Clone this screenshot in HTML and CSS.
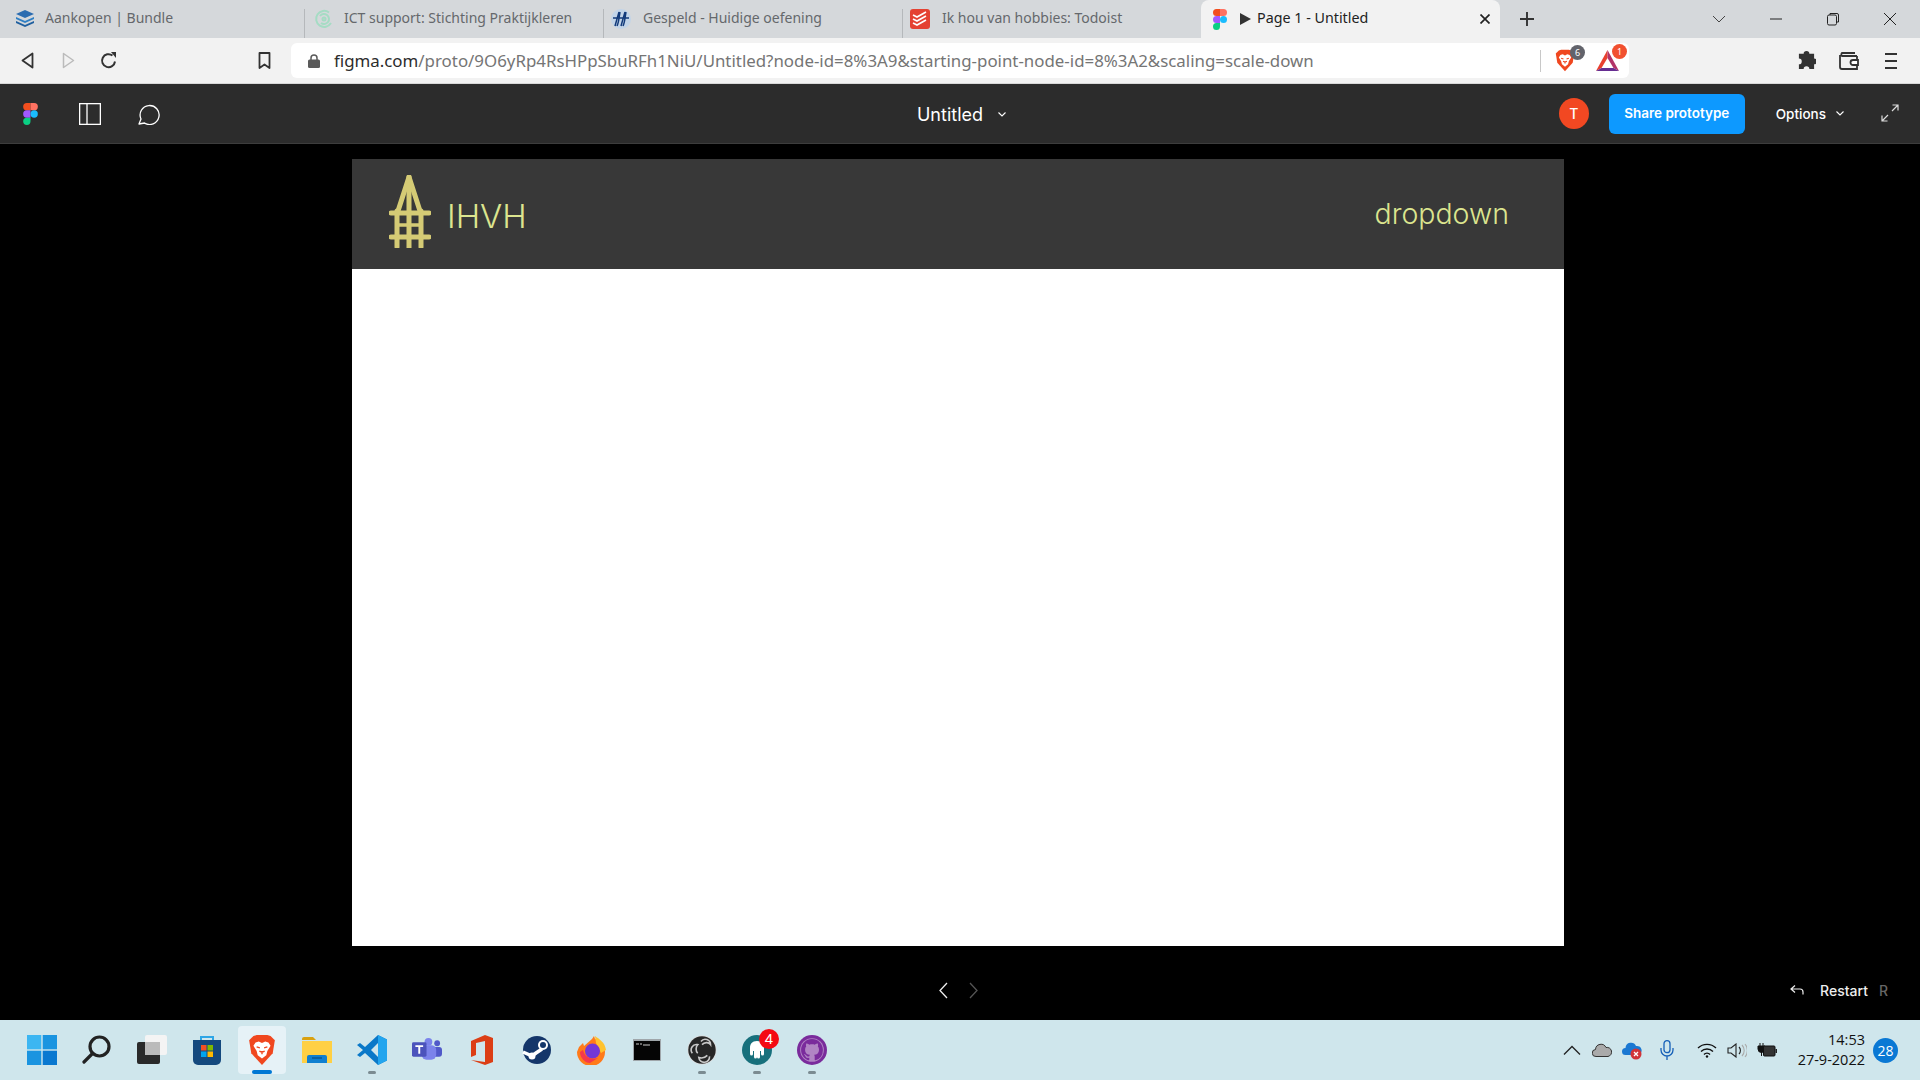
FILE: index.html
```html
<!DOCTYPE html>
<html lang="en">
	<head>
		<meta charset="UTF-8" />
		<title>Page 1 - Untitled</title>
		<link rel="stylesheet" href="styles.css">
	</head>
	<body>
		<!-- browser tabs -->
		<div class="tabstrip">
			<div class="tab">
				<svg class="favicon" viewBox="0 0 20 20"><path d="M10 1l9 4-9 4-9-4z" fill="#2b6cb0"/><path d="M1 8l9 4 9-4v2l-9 4-9-4z" fill="#2f7fc4"/><path d="M1 12l9 4 9-4v2l-9 4-9-4z" fill="#1f5f9f"/></svg>
				<span class="tab-title">Aankopen | Bundle</span>
			</div>
			<div class="tab">
				<svg class="favicon" viewBox="0 0 20 20" fill="none" stroke="#a5dcc4" stroke-width="2"><path d="M15 3.5A8 8 0 1 0 17 14"/><path d="M6 7a5 5 0 1 1 1 7"/><circle cx="10" cy="10" r="1.5"/></svg>
				<span class="tab-title">ICT support: Stichting Praktijkleren</span>
			</div>
			<div class="tab">
				<svg class="favicon favicon-shift" viewBox="0 0 20 20"><circle cx="10" cy="10" r="10" fill="#c2d4e8"/><path d="M8 3L4 17M9 3c-1 5-1 10-3 14M14 3l-4 14M15 3c-1 5-1 10-3 14M2 9h16" fill="none" stroke="#123a7a" stroke-width="1.500"/></svg>
				<span class="tab-title">Gespeld - Huidige oefening</span>
			</div>
			<div class="tab">
				<svg class="favicon favicon-shift" viewBox="0 0 20 20"><rect width="20" height="20" rx="3" fill="#e44232"/><path d="M3 6l4 2 9-5M3 10l4 2 9-5M3 14l4 2 9-5" fill="none" stroke="#fff" stroke-width="1.600"/></svg>
				<span class="tab-title">Ik hou van hobbies: Todoist</span>
			</div>
			<div class="tab tab-active">
				<svg class="favicon-figma" viewBox="0 0 14 21"><path d="M0 3.5A3.5 3.5 0 0 1 3.500 0H7v7H3.500A3.500 3.500 0 0 1 0 3.500z" fill="#f24e1e"/><path d="M7 0h3.500a3.500 3.500 0 0 1 0 7H7z" fill="#ff7262"/><path d="M0 10.500A3.500 3.500 0 0 1 3.500 7H7v7H3.500A3.500 3.500 0 0 1 0 10.500z" fill="#a259ff"/><circle cx="10.500" cy="10.500" r="3.500" fill="#1abcfe"/><path d="M0 17.500A3.500 3.500 0 0 1 3.500 14H7v3.500a3.500 3.500 0 0 1-7 0z" fill="#0acf83"/></svg>
				<span class="play"></span>
				<span class="tab-title tab-title-active">Page 1 - Untitled</span>
				<svg class="tab-close" viewBox="0 0 10 10" fill="none" stroke="#222" stroke-width="1.700"><path d="M0.500 0.500l9 9M9.500 0.500l-9 9"/></svg>
			</div>
			<svg class="new-tab" viewBox="0 0 14 14" fill="none" stroke="#333" stroke-width="1.900"><path d="M7 0v14M0 7h14"/></svg>
			<div class="window-controls">
				<svg class="win-icon" viewBox="0 0 14 14" fill="none" stroke="#444"><path d="M1 4l6 6 6-6"/></svg>
				<svg class="win-icon" viewBox="0 0 14 14" fill="none" stroke="#222"><path d="M1 7h12"/></svg>
				<svg class="win-icon" viewBox="0 0 14 14" fill="none" stroke="#222"><rect x="1.500" y="3" width="9" height="10" rx="1.500"/><path d="M4 3V1.500h7a1.500 1.500 0 0 1 1.500 1.500v7H10.500"/></svg>
				<svg class="win-icon" viewBox="0 0 14 14" fill="none" stroke="#222"><path d="M1 1l12 12M13 1L1 13"/></svg>
			</div>
		</div>

		<!-- address bar -->
		<div class="toolbar">
			<div class="nav-buttons">
				<svg class="tool-back" viewBox="0 0 13 17" fill="none" stroke="#333" stroke-width="1.800"><path d="M11.500 1.500v14L1.500 8.500z" stroke-linejoin="round"/></svg>
				<svg class="tool-forward" viewBox="0 0 13 17" fill="none" stroke="#bbb" stroke-width="1.500"><path d="M1.500 1.500v14l10-7z" stroke-linejoin="round"/></svg>
				<svg class="tool-reload" viewBox="0 0 17 17" fill="none" stroke="#333" stroke-width="2"><path d="M15 9.500A6.500 6.500 0 1 1 12.500 3.500"/><path d="M11 0h5v6z" fill="#333" stroke="none"/></svg>
				<svg class="tool-bookmark" viewBox="0 0 13 17" fill="none" stroke="#333" stroke-width="1.800"><path d="M1.500 1h10v15l-5-3.500-5 3.500z" stroke-linejoin="round"/></svg>
			</div>
			<div class="urlbox">
				<svg class="lock" viewBox="0 0 12 14"><path d="M3 6V4a3 3 0 0 1 6 0v2" fill="none" stroke="#5a5a5a" stroke-width="1.500"/><rect y="5.500" width="12" height="8.500" rx="1.500" fill="#5a5a5a"/></svg>
				<span class="url"><span class="url-host">figma.com</span>/proto/9O6yRp4RsHPpSbuRFh1NiU/Untitled?node-id=8%3A9&amp;starting-point-node-id=8%3A2&amp;scaling=scale-down</span>
				<span class="url-sep"></span>
				<div class="shield">
					<svg class="shield-icon" viewBox="0 0 26 28"><path d="M5 1l3-1h10l3 1 4 4-2 12-10 11L3 17 1 5z" fill="#f0471f"/><path d="M7 7l3-1 3 1.500L16 6l3 1 2 3-3 5-1 4-4 3-4-3-1-4-3-5z" fill="#fff"/><path d="M8 11l3 1M18 11l-3 1M13 15v3M10.500 15l2.500 1 2.500-1" fill="none" stroke="#f0471f" stroke-width="1.500"/></svg>
					<span class="ext-badge ext-badge-grey">6</span>
				</div>
				<div class="bat">
					<svg class="bat-icon" viewBox="0 0 23 21"><path d="M11.500 0v8l-6 10L0 21z" fill="#e8402f"/><path d="M11.500 0L23 21l-5.500-3-6-10z" fill="#b23368"/><path d="M0 21h23l-5.500-3h-12z" fill="#662d91"/></svg>
					<span class="ext-badge ext-badge-red">1</span>
				</div>
			</div>
			<div class="tool-right">
				<svg class="tool-puzzle" viewBox="0 0 20 20"><path d="M7 3a3 3 0 0 1 6 0h5v5a3 3 0 0 1 0 6v5h-5a3 3 0 0 0-6 0H2v-5a3 3 0 0 0 0-6V3z" fill="#333"/></svg>
				<svg class="tool-wallet" viewBox="0 0 20 18" fill="none" stroke="#333" stroke-width="1.800"><path d="M18 4H3a2 2 0 0 1 0-3h13M1 3v12a2 2 0 0 0 2 2h15V4"/><path d="M19 8h-5a2 2 0 0 0 0 5h5z" fill="#fff"/></svg>
				<svg class="tool-menu" viewBox="0 0 12 18" fill="none" stroke="#333" stroke-width="2"><path d="M0 2h12M0 9h12M0 16h12"/></svg>
			</div>
		</div>

		<!-- figma prototype bar -->
		<div class="figma-bar">
			<div class="figma-left">
				<svg class="figma-logo" viewBox="0 0 14 21"><path d="M0 3.5A3.5 3.5 0 0 1 3.500 0H7v7H3.500A3.500 3.500 0 0 1 0 3.500z" fill="#f24e1e"/><path d="M7 0h3.500a3.500 3.500 0 0 1 0 7H7z" fill="#ff7262"/><path d="M0 10.500A3.500 3.500 0 0 1 3.500 7H7v7H3.500A3.500 3.500 0 0 1 0 10.500z" fill="#a259ff"/><circle cx="10.500" cy="10.500" r="3.500" fill="#1abcfe"/><path d="M0 17.500A3.500 3.500 0 0 1 3.500 14H7v3.500a3.500 3.500 0 0 1-7 0z" fill="#0acf83"/></svg>
				<svg class="panel-icon" viewBox="0 0 22 22" fill="none" stroke="#fff" stroke-width="1.300"><rect x="0.650" y="0.650" width="20.700" height="20.700"/><path d="M8 0.650v20.700"/></svg>
				<svg class="comment-icon" viewBox="0 0 22 22" fill="none" stroke="#fff" stroke-width="1.300"><path d="M1 21l2-5A9.500 9.500 0 1 1 6.500 20z" stroke-linejoin="round"/></svg>
			</div>
			<div class="figma-title">
				<span>Untitled</span>
				<svg class="chevron" viewBox="0 0 8 5" fill="none" stroke="#fff" stroke-width="1.100"><path d="M0.500 0.500L4 4l3.500-3.500"/></svg>
			</div>
			<div class="figma-right">
				<span class="avatar">T</span>
				<span class="share-btn">Share prototype</span>
				<span class="options">Options</span>
				<svg class="chevron options-chevron" viewBox="0 0 8 5" fill="none" stroke="#fff" stroke-width="1.100"><path d="M0.500 0.500L4 4l3.500-3.500"/></svg>
				<svg class="expand-icon" viewBox="0 0 18 18" fill="none" stroke="#ddd" stroke-width="1.200"><path d="M11 7l6-6M11.500 1H17v5.500M7 11l-6 6M6.500 17H1v-5.500"/></svg>
			</div>
		</div>

		<!-- prototype canvas -->
		<div class="viewer">
			<div class="frame">
				<div class="frame-header">
					<div class="brand">
						<svg class="brand-logo" viewBox="0 0 42 73" fill="none" stroke="#d5cb75" stroke-linecap="round" stroke-linejoin="round">
							<path d="M9 36L20 2l11 34" stroke-width="5"/>
							<path d="M20 2v71" stroke-width="5"/>
							<path d="M8 36v36M32 36v36" stroke-width="5"/>
							<path d="M2 38h38M2 62h38" stroke-width="5"/>
							<path d="M8 50h24" stroke-width="3.500"/>
						</svg>
						<span class="brand-name">IHVH</span>
					</div>
					<span class="dropdown">dropdown</span>
				</div>
				<div class="frame-body"></div>
			</div>
			<div class="viewer-footer">
				<span></span>
				<div class="pager">
					<svg class="pager-icon" viewBox="0 0 9 17" fill="none" stroke="#eee" stroke-width="1.300"><path d="M8 1L1 8.500 8 16"/></svg>
					<svg class="pager-icon" viewBox="0 0 9 17" fill="none" stroke="#555" stroke-width="1.300"><path d="M1 1l7 7.500L1 16"/></svg>
				</div>
				<div class="restart">
					<svg class="restart-icon" viewBox="0 0 14 10" fill="none" stroke="#eee" stroke-width="1.200"><path d="M5 0.500L1 4l4 3.500M1 4h9a3 3 0 0 1 3 3v2.500"/></svg>
					<span class="restart-label">Restart</span>
					<span class="restart-key">R</span>
				</div>
			</div>
		</div>

		<!-- windows taskbar -->
		<div class="taskbar">
			<div class="task-icons">
				<div class="task-item">
					<svg class="task-icon" viewBox="0 0 30 30"><rect width="14.300" height="14.300" fill="#3cb6f2"/><rect x="15.700" width="14.300" height="14.300" fill="#1a94e0"/><rect y="15.700" width="14.300" height="14.300" fill="#1a94e0"/><rect x="15.700" y="15.700" width="14.300" height="14.300" fill="#0a78d0"/></svg>
				</div>
				<div class="task-item">
					<svg class="task-icon" viewBox="0 0 30 30" fill="none" stroke="#222" stroke-width="3.200"><circle cx="17.500" cy="11.500" r="9.500"/><path d="M10.500 18.500L2 27" stroke-linecap="round"/></svg>
				</div>
				<div class="task-item">
					<svg class="task-icon" viewBox="0 0 30 30"><rect y="7" width="23" height="22" rx="2" fill="#2a2a2a"/><rect x="8" y="0" width="22" height="20" rx="2" fill="#f4f4f4"/><rect x="8" y="7" width="15" height="13" fill="#bbb"/></svg>
				</div>
				<div class="task-item">
					<svg class="task-icon" viewBox="0 0 30 30"><path d="M9 6V2h12v4" fill="none" stroke="#2ea6e6" stroke-width="2"/><path d="M1 5h28v20a5 5 0 0 1-5 5H6a5 5 0 0 1-5-5z" fill="#14497e"/><rect x="9" y="10" width="5.500" height="5.500" fill="#f25022"/><rect x="15.500" y="10" width="5.500" height="5.500" fill="#7fba00"/><rect x="9" y="16.500" width="5.500" height="5.500" fill="#00a4ef"/><rect x="15.500" y="16.500" width="5.500" height="5.500" fill="#ffb900"/></svg>
				</div>
				<div class="task-item task-active">
					<svg class="task-icon" viewBox="0 0 26 28"><path d="M5 1l3-1h10l3 1 4 4-2 12-10 11L3 17 1 5z" fill="#f0471f"/><path d="M7 7l3-1 3 1.500L16 6l3 1 2 3-3 5-1 4-4 3-4-3-1-4-3-5z" fill="#fff"/><path d="M8 11l3 1M18 11l-3 1M13 15v3M10.500 15l2.500 1 2.500-1" fill="none" stroke="#f0471f" stroke-width="1.300"/></svg>
					<span class="task-bar-active"></span>
				</div>
				<div class="task-item">
					<svg class="task-icon" viewBox="0 0 30 26"><path d="M0 2a2 2 0 0 1 2-2h9l3 3h-14z" fill="#d9a110"/><path d="M0 4h30v22H0z" fill="#ffd044"/><path d="M5 20a2 2 0 0 1 2-2h16a2 2 0 0 1 2 2v6H5z" fill="#0f7fd0"/><path d="M10 21h10" stroke="#0a4d85" stroke-width="1.200"/></svg>
				</div>
				<div class="task-item">
					<svg class="task-icon" viewBox="0 0 30 30"><path d="M21 0l9 4.500v21L21 30 8 18l-5 4-3-2 6-5-6-5 3-2 5 4z" fill="#0a78c8"/><path d="M21 0l9 4.500v21L21 30z" fill="#23a5ee"/><path d="M21 8l-7 7 7 7z" fill="#cfe6ec"/></svg>
					<span class="task-dot"></span>
				</div>
				<div class="task-item">
					<svg class="task-icon" viewBox="0 0 31 26"><circle cx="17" cy="4.500" r="4" fill="#7b83eb"/><circle cx="26" cy="6" r="3" fill="#5059c9"/><rect x="21" y="10" width="10" height="10" rx="3" fill="#5059c9"/><rect x="10" y="8" width="15" height="15" rx="5" fill="#7b83eb"/><rect y="5" width="15" height="15" rx="1.500" fill="#4b53bc"/><path d="M3.500 9h8M7.500 9v8" stroke="#fff" stroke-width="2"/></svg>
				</div>
				<div class="task-item">
					<svg class="task-icon" viewBox="0 0 24 30"><path d="M1 6l14-6 8 3v24l-8 3-14-5 14 2V6l-9 2v12l-5 2z" fill="#dc3e15"/></svg>
				</div>
				<div class="task-item">
					<svg class="task-icon" viewBox="0 0 30 30"><circle cx="15" cy="15" r="14" fill="#14366a"/><path d="M1 17l9 4 4-3 6-4" stroke="#fff" stroke-width="3.500" fill="none"/><circle cx="21" cy="10" r="5" fill="#fff"/><circle cx="21" cy="10" r="3" fill="#14366a"/><circle cx="10" cy="21" r="3.500" fill="#fff"/></svg>
				</div>
				<div class="task-item">
					<svg class="task-icon" viewBox="0 0 30 30"><path d="M2 12L6 8l1 3 8-7 2-3 1 3c5 1 10 5 10 13a14 14 0 0 1-28 0z" fill="#ff7a1a"/><path d="M18 1c4 3 10 6 11 14l-5 3-5-10z" fill="#ffc22e"/><circle cx="15.500" cy="16" r="7.500" fill="#7337d6"/><path d="M6 15c2 8 9 10 15 8l-8 5c-5 0-10-5-10-11z" fill="#f5384b"/></svg>
				</div>
				<div class="task-item">
					<svg class="terminal" viewBox="0 0 28 22"><rect width="28" height="22" fill="#9fa6aa"/><rect x="1" y="2" width="26" height="19" fill="#050505"/><path d="M3 5h3M7 5h2M10 6h7" stroke="#ccc" stroke-width="1"/></svg>
				</div>
				<div class="task-item">
					<svg class="task-icon" viewBox="0 0 28 28"><circle cx="14" cy="14" r="13.500" fill="#ddd"/><circle cx="14" cy="14" r="12.800" fill="#262626"/><g fill="none" stroke="#c8c8c8" stroke-width="1.500"><path d="M13 6a5 5 0 0 1 9 3c-2-3-6-2-8 0"/><path d="M5 17a5 5 0 0 1 5-8c-2 2-2 6 0 8"/><path d="M21 20a5 5 0 0 1-10 1c3 1 6 0 8-2"/></g></svg>
					<span class="task-dot"></span>
				</div>
				<div class="task-item">
					<svg class="task-icon" viewBox="0 0 30 30"><circle cx="15" cy="15" r="15" fill="#17707c"/><path d="M15 6c-5 0-7 3-7 7v6a1.500 1.500 0 0 0 3 0v-3h1v6a1.500 1.500 0 0 0 3 0v-5h0v5a1.500 1.500 0 0 0 3 0v-6h1v3a1.500 1.500 0 0 0 3 0v-6c0-4-2-7-7-7z" fill="#fff"/></svg>
					<span class="task-badge">4</span>
					<span class="task-dot"></span>
				</div>
				<div class="task-item">
					<svg class="task-icon" viewBox="-3 -3 22 22"><circle cx="8" cy="8" r="11" fill="#7a2b9c"/><circle cx="8" cy="8" r="8.700" fill="#b184c4"/><path d="M8 0C3.580 0 0 3.580 0 8c0 3.540 2.290 6.530 5.470 7.590.4.070.55-.17.55-.38 0-.19-.01-.82-.01-1.490-2.010.37-2.530-.49-2.690-.94-.09-.23-.48-.94-.82-1.130-.28-.15-.68-.52-.01-.53.63-.01 1.080.58 1.230.82.72 1.210 1.870.87 2.330.66.070-.52.28-.87.51-1.070-1.780-.2-3.640-.89-3.640-3.950 0-.87.31-1.590.82-2.150-.08-.2-.36-1.020.08-2.120 0 0 .67-.21 2.200.82.64-.18 1.320-.27 2-.27.68 0 1.360.09 2 .27 1.530-1.040 2.200-.82 2.200-.82.44 1.100.16 1.920.08 2.120.51.56.82 1.270.82 2.150 0 3.070-1.870 3.750-3.650 3.950.29.25.54.73.54 1.480 0 1.070-.01 1.930-.01 2.200 0 .21.15.46.55.38A8.013 8.013 0 0 0 16 8c0-4.420-3.580-8-8-8z" fill="#7a2b9c"/></svg>
					<span class="task-dot"></span>
				</div>
			</div>
			<div class="tray">
				<svg class="tray-chevron" viewBox="0 0 18 10" fill="none" stroke="#222" stroke-width="1.300"><path d="M1 9.500l8-8 8 8"/></svg>
				<svg class="tray-cloud" viewBox="0 0 20 14"><path d="M4 13.500a3.500 3.500 0 0 1-.5-7A5.500 5.500 0 0 1 14 4.500a4.500 4.500 0 0 1 2 9z" fill="#aaa" stroke="#333"/></svg>
				<svg class="tray-cloud-error" viewBox="0 0 20 19"><path d="M3.500 14a3.500 3.500 0 0 1 0-7A5.500 5.500 0 0 1 14 5a4.500 4.500 0 0 1 2 9z" fill="#1b78d2"/><circle cx="14" cy="13" r="5.500" fill="#d13438"/><path d="M12 11l4 4M16 11l-4 4" stroke="#fff" stroke-width="1.300"/></svg>
				<svg class="tray-mic" viewBox="0 0 14 20" fill="none" stroke="#1660b8" stroke-width="1.300"><rect x="4" y="0.700" width="6" height="12" rx="3"/><path d="M1 8v2a6 6 0 0 0 12 0V8M7 16v4"/></svg>
				<svg class="tray-wifi" viewBox="0 0 20 15" fill="none" stroke="#111" stroke-width="1.400"><path d="M1 5a13 13 0 0 1 18 0M4 8.500a8.500 8.500 0 0 1 12 0M7 11.500a4 4 0 0 1 6 0"/><circle cx="10" cy="13.500" r="1.200" fill="#111" stroke="none"/></svg>
				<svg class="tray-volume" viewBox="0 0 20 15" fill="none" stroke="#222" stroke-width="1.100"><path d="M1 5v5h3l5 4V1L4 5z"/><path d="M12 4a5 5 0 0 1 0 7"/><path d="M15 2a8 8 0 0 1 0 11M18 1a10 10 0 0 1 0 13" stroke="#aaa"/></svg>
				<svg class="tray-battery" viewBox="0 0 20 15"><path d="M3 0v3M6 0v3M1 3h7v3a3 3 0 0 1-7 0zM4.500 9v4" stroke="#111" fill="#111"/><rect x="6.500" y="3" width="11.500" height="10" rx="1" fill="#333" stroke="#111"/><rect x="18.500" y="6" width="1.500" height="4" fill="#222"/></svg>
				<div class="clock">
					<span>14:53</span>
					<span>27-9-2022</span>
				</div>
				<span class="notif">28</span>
			</div>
		</div>
	</body>
</html>
```

FILE: styles.css
```css
* {
	box-sizing: border-box;
}
html,
body {
	margin: 0;
	height: 100%;
}
body {
	width: 1920px;
	height: 1080px;
	display: flex;
	flex-direction: column;
	overflow: hidden;
	background: #000;
	font-family: "Noto Sans", sans-serif;
}
svg {
	display: block;
	flex: none;
}

/* tabs */
.tabstrip {
	height: 38px;
	flex: none;
	display: flex;
	padding-left: 5px;
	background: #d5d8db;
}
.tab {
	width: 299px;
	height: 38px;
	display: flex;
	align-items: center;
	padding-left: 10px;
	position: relative;
}
.tab + .tab::before {
	content: "";
	position: absolute;
	left: 0;
	top: 9px;
	height: 29px;
	width: 1px;
	background: #b5b8bb;
}
.favicon {
	width: 20px;
	height: 20px;
	margin-right: 10px;
}
.favicon-shift {
	margin-left: -2px;
	margin-right: 12px;
}
.tab-title {
	font-size: 14px;
	line-height: 18px;
	margin-bottom: 2px;
	color: #65686c;
	white-space: nowrap;
}
.tab-active {
	background: #f2f2f2;
	border-radius: 8px 8px 0 0;
	padding-left: 12px;
}
.tab-active::before {
	display: none;
}
.favicon-figma {
	width: 14px;
	height: 21px;
}
.play {
	width: 0;
	height: 0;
	margin: 0 6px 0 13px;
	border-left: 11px solid #333;
	border-top: 6px solid transparent;
	border-bottom: 6px solid transparent;
}
.tab-title-active {
	color: #222;
	font-size: 14.300px;
}
.tab-close {
	width: 10px;
	height: 10px;
	margin-left: auto;
	margin-right: 10px;
}
.new-tab {
	width: 14px;
	height: 14px;
	margin: 12px 0 0 20px;
}
.window-controls {
	display: flex;
	align-items: center;
	margin-left: 178px;
	gap: 43px;
	height: 38px;
}
.win-icon {
	width: 14px;
	height: 14px;
}

/* address bar */
.toolbar {
	height: 46px;
	flex: none;
	display: flex;
	align-items: center;
	background: #f2f2f2;
	border-bottom: 1px solid #d8d8d8;
}
.nav-buttons {
	width: 291px;
	display: flex;
	align-items: center;
	padding-left: 21px;
}
.tool-back,
.tool-forward,
.tool-bookmark {
	width: 13px;
	height: 17px;
}
.tool-forward {
	margin-left: 28px;
}
.tool-reload {
	width: 17px;
	height: 17px;
	margin-left: 25px;
}
.tool-bookmark {
	margin-left: 141px;
}
.urlbox {
	width: 1338px;
	height: 35px;
	display: flex;
	align-items: center;
	background: #fff;
	border-radius: 6px;
	padding-left: 17px;
}
.lock {
	width: 12px;
	height: 14px;
	margin-right: 14px;
}
.url {
	width: 1206px;
	font-size: 16.880px;
	color: #757575;
	white-space: nowrap;
}
.url-host {
	color: #2c2c2c;
}
.url-sep {
	width: 1px;
	height: 22px;
	background: #c8c8c8;
}
.shield,
.bat {
	position: relative;
	margin-left: 14px;
}
.bat {
	margin-left: 21px;
}
.shield-icon {
	width: 20px;
	height: 23px;
}
.bat-icon {
	width: 23px;
	height: 21px;
}
.ext-badge {
	position: absolute;
	width: 15px;
	height: 15px;
	top: -4px;
	left: 15px;
	border-radius: 50%;
	color: #fff;
	font-size: 9px;
	line-height: 15px;
	text-align: center;
}
.ext-badge-grey {
	background: #62636b;
}
.ext-badge-red {
	background: #f1502f;
	left: 16px;
	top: -6px;
}
.tool-right {
	display: flex;
	align-items: center;
	padding-left: 168px;
}
.tool-puzzle {
	width: 19px;
	height: 19px;
}
.tool-wallet {
	width: 20px;
	height: 18px;
	margin-left: 23px;
}
.tool-menu {
	width: 12px;
	height: 18px;
	margin-left: 26px;
}

/* figma bar */
.figma-bar {
	height: 60px;
	flex: none;
	display: grid;
	grid-template-columns: 1fr auto 1fr;
	align-items: center;
	background: #2c2c2c;
	border-bottom: 1px solid #3d3d3d;
	color: #fff;
}
.figma-left {
	display: flex;
	align-items: center;
	padding-left: 23px;
}
.figma-logo {
	width: 15px;
	height: 22px;
}
.panel-icon {
	width: 22px;
	height: 22px;
	margin-left: 41px;
}
.comment-icon {
	width: 22px;
	height: 22px;
	margin-left: 37px;
}
.figma-title {
	display: flex;
	align-items: center;
	font-family: Inter, sans-serif;
	font-size: 18px;
	padding: 2px 0 0 3px;
}
.chevron {
	width: 8px;
	height: 5px;
	margin-left: 15px;
}
.figma-right {
	display: flex;
	align-items: center;
	justify-content: flex-end;
	font-family: Inter, sans-serif;
}
.avatar {
	width: 30px;
	height: 31px;
	border-radius: 50%;
	background: #f24822;
	font-size: 14px;
	line-height: 31px;
	text-align: center;
	font-weight: 500;
}
.share-btn {
	width: 136px;
	height: 40px;
	margin-left: 20px;
	border-radius: 6px;
	background: #0d99ff;
	font-size: 13.500px;
	font-weight: 600;
	line-height: 38px;
	text-align: center;
}
.options {
	margin-left: 31px;
	font-size: 13.500px;
	font-weight: 500;
}
.options-chevron {
	margin-left: 10px;
}
.expand-icon {
	width: 18px;
	height: 18px;
	margin: -2px 21px 0 37px;
}

/* canvas */
.viewer {
	flex: 1;
	display: flex;
	flex-direction: column;
	background: #000;
	padding-top: 15px;
}
.frame {
	width: 1212px;
	height: 787px;
	margin-left: 352px;
	display: flex;
	flex-direction: column;
}
.frame-header {
	height: 110px;
	flex: none;
	display: flex;
	align-items: center;
	justify-content: space-between;
	padding: 0 55px 0 37px;
	background: #383838;
	font-family: Inter, sans-serif;
	font-weight: 300;
	color: #dce58f;
}
.brand {
	display: flex;
	align-items: center;
	padding-bottom: 5px;
}
.brand-logo {
	width: 42px;
	height: 73px;
}
.brand-name {
	font-size: 33px;
	margin: 9px 0 0 16px;
}
.dropdown {
	font-size: 28.500px;
	margin-bottom: 2px;
}
.frame-body {
	flex: 1;
	background: #fff;
}
.viewer-footer {
	flex: 1;
	display: grid;
	grid-template-columns: 1fr auto 1fr;
	align-items: center;
	padding-top: 14px;
	font-family: Inter, sans-serif;
	font-size: 14px;
	font-weight: 500;
}
.pager {
	display: flex;
	gap: 21px;
	margin-right: 3px;
}
.pager-icon {
	width: 9px;
	height: 17px;
}
.restart {
	display: flex;
	align-items: center;
	justify-content: flex-end;
	padding-right: 32px;
	color: #eee;
}
.restart-icon {
	width: 14px;
	height: 10px;
}
.restart-label {
	margin-left: 16px;
}
.restart-key {
	margin-left: 11px;
	color: #666;
}

/* taskbar */
.taskbar {
	height: 60px;
	flex: none;
	display: flex;
	justify-content: space-between;
	align-items: center;
	padding-left: 18px;
	background: #cfe6ec;
}
.task-icons {
	display: flex;
	gap: 7px;
}
.task-item {
	width: 48px;
	height: 48px;
	display: flex;
	align-items: center;
	justify-content: center;
	position: relative;
}
.task-icon {
	width: 30px;
	height: 30px;
}
.terminal {
	width: 28px;
	height: 22px;
}
.task-active {
	background: #e6f2f7;
	border-radius: 4px;
}
.task-bar-active {
	position: absolute;
	left: 14px;
	bottom: 0;
	width: 20px;
	height: 4px;
	border-radius: 2px;
	background: #0078d4;
}
.task-dot {
	position: absolute;
	left: 20px;
	bottom: 0;
	width: 8px;
	height: 3px;
	border-radius: 2px;
	background: #7b8b91;
}
.task-badge {
	position: absolute;
	top: 3px;
	left: 26px;
	width: 20px;
	height: 20px;
	border-radius: 50%;
	background: #f40a12;
	color: #fff;
	font-family: "Liberation Sans", sans-serif;
	font-size: 15px;
	line-height: 20px;
	text-align: center;
}
.tray {
	display: flex;
	align-items: center;
	color: #111;
}
.tray-chevron {
	width: 18px;
	height: 10px;
}
.tray-cloud {
	width: 20px;
	height: 14px;
	margin-left: 11px;
}
.tray-cloud-error {
	width: 20px;
	height: 19px;
	margin-left: 10px;
}
.tray-mic {
	width: 14px;
	height: 20px;
	margin-left: 18px;
}
.tray-wifi {
	width: 20px;
	height: 15px;
	margin-left: 23px;
}
.tray-volume {
	width: 20px;
	height: 15px;
	margin-left: 10px;
}
.tray-battery {
	width: 20px;
	height: 15px;
	margin-left: 10px;
}
.clock {
	width: 88px;
	display: flex;
	flex-direction: column;
	align-items: flex-end;
	font-family: "Open Sans", sans-serif;
	font-size: 14.500px;
	line-height: 20px;
}
.notif {
	width: 25px;
	height: 25px;
	margin: 0 22px 0 8px;
	border-radius: 50%;
	background: #0a78d4;
	color: #fff;
	font-family: "Open Sans", sans-serif;
	font-size: 14px;
	line-height: 25px;
	text-align: center;
}
```
